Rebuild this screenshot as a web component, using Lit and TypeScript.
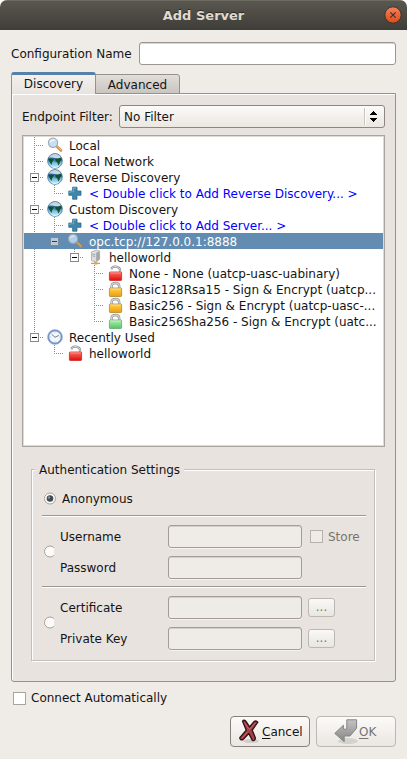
import { LitElement, html, svg, css, nothing } from "lit";
import { customElement, property } from "lit/decorators.js";
import { classMap } from "lit/directives/class-map.js";

type Branch = "" | "v" | "t" | "l" | "t-" | "l-";
interface Row {
  branches: Branch[];
  icon: string;
  label: string;
  link?: boolean;
  selected?: boolean;
}

const ROWS: Row[] = [
  { branches: ["t"], icon: "lens", label: "Local" },
  { branches: ["t"], icon: "globe", label: "Local Network" },
  { branches: ["t-"], icon: "globe", label: "Reverse Discovery" },
  { branches: ["v", "l"], icon: "plus", label: "< Double click to Add Reverse Discovery... >", link: true },
  { branches: ["t-"], icon: "globe", label: "Custom Discovery" },
  { branches: ["v", "t"], icon: "plus", label: "< Double click to Add Server... >", link: true },
  { branches: ["v", "l-"], icon: "lens", label: "opc.tcp://127.0.0.1:8888", selected: true },
  { branches: ["v", "", "l-"], icon: "server", label: "helloworld" },
  { branches: ["v", "", "", "t"], icon: "open", label: "None - None (uatcp-uasc-uabinary)" },
  { branches: ["v", "", "", "t"], icon: "gold", label: "Basic128Rsa15 - Sign & Encrypt (uatcp..." },
  { branches: ["v", "", "", "t"], icon: "gold", label: "Basic256 - Sign & Encrypt (uatcp-uasc-..." },
  { branches: ["v", "", "", "l"], icon: "green", label: "Basic256Sha256 - Sign & Encrypt (uatc..." },
  { branches: ["l-"], icon: "clock", label: "Recently Used" },
  { branches: ["", "l"], icon: "open", label: "helloworld" },
];

const padlock = (light: string, dark: string, edge: string, open = false) => svg`
  <defs><linearGradient id="b" x2="0" y2="1"><stop stop-color=${light}/><stop offset="1" stop-color=${dark}/></linearGradient></defs>
  ${open
    ? svg`<path d="M4.6 4.4C4.8 2.2 6.8 1.3 9 1.6C11.8 2 13.2 3.6 13.1 6V8" fill="none" stroke="#8c8c8c" stroke-width="2.3"/>
          <path d="M4.6 4.2C4.8 2.2 6.8 1.3 9 1.6C11.8 2 13.2 3.6 13.1 6V8" fill="none" stroke="#dedede" stroke-width="1"/>`
    : svg`<path d="M4.6 8V5.4C4.6 .9 12.2 .9 12.2 5.4V8" fill="none" stroke="#8f9193" stroke-width="2.4"/>
          <path d="M4.6 8V5.4C4.6 .9 12.2 .9 12.2 5.4V8" fill="none" stroke="#dedfe0" stroke-width="1.1"/>`}
  <rect x="2.4" y="7" width="12.2" height="8.5" rx=".8" fill="url(#b)" stroke=${edge} stroke-width=".8"/>
  <path d="M3.2 7.9H13.8" stroke="#fff" stroke-opacity=".5" stroke-width=".8"/>`;

const ICONS: Record<string, unknown> = {
  lens: svg`
    <path d="M9.2 8.8L14 13.5" stroke="#d98b3c" stroke-width="2.6" stroke-linecap="round"/>
    <path d="M9.6 8.8L14 13" stroke="#f5b97a" stroke-width="1" stroke-linecap="round"/>
    <circle cx="6" cy="5.7" r="4.6" fill="#c4e1f5" stroke="#a2aebb" stroke-width="1.2"/>
    <path d="M2.8 5.5A3.3 3.3 0 0 1 8.4 3.3Q5 4 2.8 5.5Z" fill="#f2faff"/>`,
  globe: svg`
    <defs><linearGradient id="g" x2="0" y2="1"><stop stop-color="#2b5a85"/><stop offset=".35" stop-color="#2c6a9c"/><stop offset=".65" stop-color="#7dc0e2"/><stop offset="1" stop-color="#d9f8ff"/></linearGradient></defs>
    <circle cx="8" cy="8" r="7.4" fill="url(#g)" stroke="#55809f" stroke-width=".8"/>
    <path d="M1 6L3.2 5.4L7 6.3L6.2 8.1L5 9.3L4.7 12L3.5 10.5L2.4 8.5Z" fill="#125234"/>
    <path d="M8.2 6.4L10 5L13.8 4.6L15 7.2L13.3 8L12.6 10.5L11.2 12.4L10.3 9.2L8.5 8.6Z" fill="#125234"/>
    <path d="M2 4.7Q4 1.1 8 1Q12 1.1 14 4.6Q11.3 6 8 4.9Q4.6 4.2 2 4.7Z" fill="#edf5f7" fill-opacity=".8"/>
    <path d="M4 12.8Q8 15.7 12 12.8Q9.8 15 8 15Q6 15 4 12.8Z" fill="#f0ffff"/>`,
  plus: svg`
    <path d="M5.6 2.2H10V6H14V10.3H10V14.2H5.6V10.3H1.8V6H5.6Z" fill="#3e87a8" stroke="#2d6c8c" stroke-width=".8" stroke-linejoin="round"/>
    <path d="M6.4 3.2H9M6.4 3.2V6.8H2.8V8" fill="none" stroke="#76b4cc" stroke-width=".9"/>`,
  server: svg`
    <path d="M4.4 3L9.4 1L12.6 2V10.4L9.2 13L4.4 11.6Z" fill="#dcdedf" stroke="#9c9fa1" stroke-width=".7"/>
    <path d="M9.2 3.8L12.4 2.3V10.3L9.2 12.8Z" fill="#a2a6a8"/>
    <path d="M5.4 5L8.2 5.7M5.4 6.8L8.2 7.5" stroke="#8a8d8f" stroke-width=".7"/>
    <path d="M4 14.4H13" stroke="#a0a5a9" stroke-width="1.2"/>
    <rect x="7.2" y="13" width="3" height="2.6" fill="#dba95a"/>`,
  open: padlock("#ff6d62", "#dc0d0d", "#d22a22", true),
  gold: padlock("#ffd34f", "#ed9b0c", "#b9852c"),
  green: padlock("#b6ecb4", "#52c565", "#5fac69"),
  clock: svg`
    <circle cx="8" cy="8" r="6.7" fill="#f3f6fb" stroke="#6f91c7" stroke-width="1.8"/>
    <circle cx="8" cy="8" r="7.5" fill="none" stroke="#a9bcd9" stroke-width=".6"/>
    <path d="M4.6 5.2L8 8.3L11.8 6.4" fill="none" stroke="#77808e" stroke-width="1"/>
    <path d="M8 2.5V3.5M8 12.5V13.5M2.7 8H3.7M12.4 8H13.4" stroke="#8b9cb8" stroke-width=".8"/>`,
};

@customElement("tree-row")
class TreeRow extends LitElement {
  @property({ attribute: false }) row!: Row;
  static styles = css`
    :host { display: block; }
    .row { display: flex; height: 16px; white-space: pre; line-height: 16px; }
    .row span { padding-top: 1px; }
    .selected { background: #628cb2; color: #fff; }
    .link { color: #0000ff; }
    svg { display: block; flex: none; }
    .icon { margin: 0 6px 0 3px; }
    .selected .branch { opacity: .55; }
    .selected .icon { opacity: .8; }
    .dots { stroke: #8d8a87; stroke-dasharray: 1 1; fill: none; }
  `;
  private branch(b: Branch) {
    const down = b === "v" || b.startsWith("t");
    return html`<svg class="branch" width="20" height="16" shape-rendering="crispEdges">
      ${b ? svg`<path class="dots" d="M10.5 0V${down ? 16 : 9}"/>` : nothing}
      ${b && b !== "v" ? svg`<path class="dots" d="M10 8.5H20"/>` : nothing}
      ${b.endsWith("-") ? svg`<rect x="6.5" y="4.5" width="8" height="8" fill="#fff" stroke="#8d8a87"/><path d="M8 8.5H13" stroke="#000"/>` : nothing}
    </svg>`;
  }
  render() {
    const r = this.row;
    return html`<div class=${classMap({ row: true, selected: !!r.selected, link: !!r.link })}>
      ${r.branches.map((b) => this.branch(b))}<svg class="icon" width="16" height="16">${ICONS[r.icon]}</svg><span>${r.label}</span>
    </div>`;
  }
}

@customElement("app-root")
class AppRoot extends LitElement {
  static styles = css`
    :host { display: block; width: 407px; height: 759px; background: #fff; font: 12px/16px "DejaVu Sans", sans-serif; color: #141414; }
    * { box-sizing: border-box; }
    svg { display: block; flex: none; }
    .window { height: 759px; background: #efebe7; border-radius: 7px 7px 0 0; overflow: hidden; display: flex; flex-direction: column; }
    .title { height: 30px; flex: none; display: grid; grid-template-columns: 26px 1fr 26px; align-items: center; background: linear-gradient(#5a574f, #3e3d38); border-top: 1px solid #6d6a62; color: #dfdbd2; font-size: 13px; font-weight: bold; text-align: center; text-shadow: 0 -1px #2d2c28; }
    .title span { grid-column: 2; }
    .title svg { margin: -1px 0 0 3px; }
    .body { padding: 12px 11px; flex: 1; display: flex; flex-direction: column; }
    .name { display: flex; align-items: center; justify-content: space-between; height: 23px; }
    .field { height: 23px; border: 1px solid #9c9590; border-radius: 3px; background: #fff; box-shadow: inset 0 1px #dad5d1; }
    .name .field { width: 257px; }
    .tabs { display: flex; align-items: flex-end; height: 22px; margin-top: 7px; position: relative; }
    .tab { width: 85px; text-align: center; border: 1px solid #96918c; border-bottom: 0; }
    .active { height: 22px; padding-top: 1px; border-top: 3px solid #5581a9; border-radius: 3px 3px 0 0; background: linear-gradient(#f3f0ed, #e8e3df); }
    .idle { height: 20px; padding-top: 2px; margin-left: -1px; width: 85px; background: linear-gradient(#e2ddd9, #cbc5c0); border-radius: 0 3px 0 0; border-bottom: 1px solid #96918c; }
    .pane { height: 589px; margin-top: -1px; padding: 11px 10px 0; border: 1px solid #96918c; border-radius: 0 0 3px 3px; box-shadow: inset 1px 1px #fff; background: #e8e3df; }
    .filter { display: flex; justify-content: space-between; align-items: center; }
    .combo { width: 266px; height: 23px; display: flex; align-items: center; justify-content: space-between; padding: 0 4px; border: 1px solid #8e8780; border-radius: 3px; background: linear-gradient(#fcfbf9, #ebe7e1); }
    .spin { display: flex; height: 17px; width: 16px; border-left: 1px solid #c8c3bd; box-shadow: inset 1px 0 #fff; }
    .tree { height: 312px; margin-top: 7px; border: 1px solid #aaa49f; box-shadow: inset -1px -1px #dedad6, inset 1px 1px #dedad6; padding: 1px; background: #fff; }
    .group { margin: 22px 9px 0; width: 344px; height: 192px; border: 1px solid #c3beba; box-shadow: inset 1px 1px #fff, 1px 1px #fff; padding: 0 9px 0 10px; }
    .legend { width: 149px; height: 16px; margin: -8px 0 0 -7px; padding-left: 4px; background: #e8e3df; white-space: nowrap; }
    .anon { display: flex; align-items: center; gap: 5px; height: 16px; margin-top: 13px; padding-left: 2px; }
    .anon svg { margin-top: -2px; }
    .rule { height: 2px; border-top: 1px solid #9c9792; background: #fff; width: 324px; }
    .anon + .rule { margin-top: 8px; }
    .creds { display: grid; grid-template-columns: 18px 108px 134px 1fr; height: 54px; grid-template-rows: 23px 23px; row-gap: 8px; align-items: center; margin: 8px 0 7px; }
    .last { margin: 8px 0 0; }
    .half { grid-row: 1 / 3; width: 12px; overflow: hidden; padding-left: 2px; margin-top: -1px; }
    .creds .field { background: #efebe7; box-shadow: inset 0 1px #d4cfcb, 0 1px #f5f2ef; border-color: #a39c97; }
    .creds .c2 { grid-column: 2; }
    .check { width: 13px; height: 13px; border: 1px solid #aaa49f; background: #fff; }
    .store { display: flex; align-items: center; gap: 5px; padding-left: 8px; color: #787470; }
    .store .check { background: #efebe7; border-color: #b7b1ac; }
    .browse { width: 27px; height: 19px; margin-left: 6px; border: 1px solid #bdb7b1; border-radius: 3px; background: linear-gradient(#faf9f7, #e9e5e0); text-align: center; color: #787470; }
    .auto { display: flex; align-items: center; gap: 5px; height: 16px; margin: 8px 0 0 2px; }
    .actions { display: flex; justify-content: flex-end; gap: 6px; margin-top: 10px; }
    .button { width: 80px; height: 31px; border: 1px solid #88817b; border-radius: 4px; display: flex; align-items: center; background: linear-gradient(#fcfbf9, #eae6e1); padding-left: 7px; }
    .disabled { border-color: #bdb7b1; color: #787470; padding-left: 17px; }
    .underlined { text-decoration: underline; text-underline-offset: 2px; text-decoration-thickness: 1px; }
  `;

  private radio(on: boolean) {
    return html`<svg width="13" height="13"><circle cx="6" cy="6.5" r="5.5" fill="#fcfbfa" stroke="#aaa098"/>
      ${on ? svg`<circle cx="6" cy="6.5" r="3.3" fill="#414b51"/><circle cx="5" cy="5.5" r="1.2" fill="#87939a"/>` : nothing}</svg>`;
  }

  render() {
    return html`<div class="window">
      <div class="title"><span>Add Server</span>
        <svg width="18" height="18"><defs><linearGradient id="c" x2="0" y2="1"><stop stop-color="#f5825c"/><stop offset="1" stop-color="#df4a17"/></linearGradient></defs>
          <circle cx="9" cy="9" r="8.2" fill="url(#c)" stroke="#373631"/><path d="M6.3 6.3L11.7 11.7M11.7 6.3L6.3 11.7" stroke="#463129" stroke-width="1.2"/></svg>
      </div>
      <div class="body">
        <div class="name"><span>Configuration Name</span><div class="field"></div></div>
        <div class="tabs"><div class="tab active">Discovery</div><div class="tab idle">Advanced</div></div>
        <div class="pane">
          <div class="filter"><span>Endpoint Filter:</span>
            <div class="combo"><span>No Filter</span><div class="spin"><svg width="15" height="17" shape-rendering="crispEdges"><path d="M5 7L8.5 3L12 7ZM5 10L8.5 14L12 10Z" fill="#000"/></svg></div></div>
          </div>
          <div class="tree">${ROWS.map((r) => html`<tree-row .row=${r}></tree-row>`)}</div>
          <div class="group">
            <div class="legend">Authentication Settings</div>
            <div class="anon">${this.radio(true)}<span>Anonymous</span></div>
            <div class="rule"></div>
            <div class="creds">
              <div class="half">${this.radio(false)}</div>
              <span class="c2">Username</span><div class="field"></div><div class="store"><div class="check"></div>Store</div>
              <span class="c2">Password</span><div class="field"></div>
            </div>
            <div class="rule"></div>
            <div class="creds last">
              <div class="half">${this.radio(false)}</div>
              <span class="c2">Certificate</span><div class="field"></div><div class="browse">...</div>
              <span class="c2">Private Key</span><div class="field"></div><div class="browse">...</div>
            </div>
          </div>
        </div>
        <div class="auto"><div class="check"></div>Connect Automatically</div>
        <div class="actions">
          <div class="button">
            <svg width="24" height="26"><ellipse cx="13" cy="22" rx="8" ry="2" fill="#000" opacity=".12"/>
              <path d="M4.6 2.2Q6 .4 7.6 2L11.6 8L16 2.6Q18 1 19.8 3.2L14.2 11.2L17.4 19Q17 22.4 14.4 21.4L10.8 14.4L5 20.6Q2 21.4 1.8 18.8L8.3 11.2Z" fill="#a84047" stroke="#301719" stroke-width="1.4" stroke-linejoin="round"/>
              <path d="M6.4 3.5L11.4 10.5L17 4.2M9.4 13L4 19" fill="none" stroke="#c7656a" stroke-width="1"/></svg>
            <span><span class="underlined">C</span>ancel</span>
          </div>
          <div class="button disabled">
            <svg width="25" height="28"><defs><linearGradient id="o" x2="0" y2="1"><stop stop-color="#c3c3c3"/><stop offset="1" stop-color="#858585"/></linearGradient></defs>
              <ellipse cx="14" cy="23" rx="10" ry="3" fill="#000" opacity=".1"/>
              <path d="M12.8 1.8H22.6V10.2L16 18H10.2V23.6L.8 15.4L9.4 7.2V11.2H12.8Z" fill="url(#o)" stroke="#858585" stroke-linejoin="round"/></svg>
            <span><span class="underlined">O</span>K</span>
          </div>
        </div>
      </div>
    </div>`;
  }
}
